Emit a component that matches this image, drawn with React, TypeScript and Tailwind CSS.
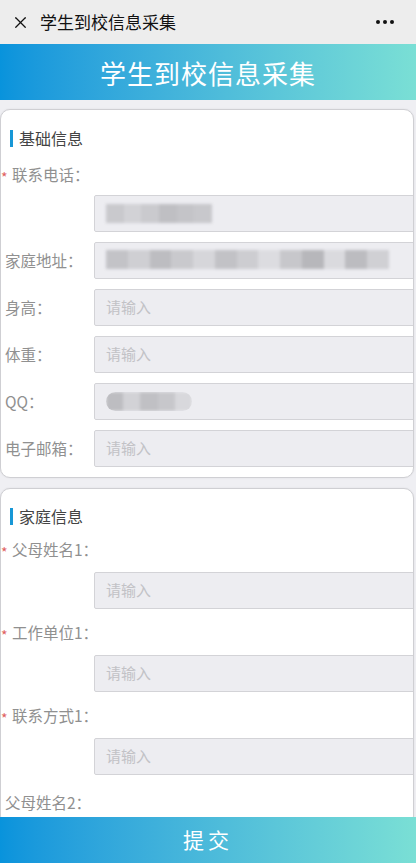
import { X } from "lucide-react";

const font = { fontFamily: '"Noto Sans CJK SC", "Noto Sans", sans-serif' };

const Label = ({ text, required }: { text: string; required?: boolean }) => (
  <div className="flex items-center h-6 text-[15.5px] text-[#909090] whitespace-nowrap">
    {required ? (
      <span className="w-[11px] text-[#e06060] text-[14px] leading-none pt-[3px]">*</span>
    ) : (
      <span className="w-[4px]" />
    )}
    <span>{text}：</span>
  </div>
);

const Input = ({ children }: { children?: React.ReactNode }) => (
  <div className="flex-1 h-[37px] bg-[#ededf1] border border-[#d3d3d7] rounded-[2px] flex items-center pl-[11px] text-[15px] text-[#c2c2c6] -mr-[2px]">
    {children ?? "请输入"}
  </div>
);

const Blur = ({ w, parts }: { w: number; parts: string[] }) => (
  <div className="flex h-[19px] blur-[1.5px]" style={{ width: w }}>
    {parts.map((c, i) => (
      <div key={i} className="flex-1 h-full" style={{ backgroundColor: c }} />
    ))}
  </div>
);

const Row = ({ text, children }: { text: string; children?: React.ReactNode }) => (
  <div className="flex items-center mt-[10px]">
    <div className="w-[93px] shrink-0">
      <Label text={text} />
    </div>
    <Input>{children}</Input>
  </div>
);

const Stacked = ({ text, required, top, gap }: { text: string; required?: boolean; top: number; gap: number }) => (
  <div style={{ marginTop: top }}>
    <Label text={text} required={required} />
    <div className="flex pl-[93px]" style={{ marginTop: gap }}>
      <Input />
    </div>
  </div>
);

const SectionTitle = ({ text }: { text: string }) => (
  <div className="flex items-center h-6 pl-[9px]">
    <span className="w-[3px] h-[17px] bg-[#1797d6] mr-[6px]" />
    <span className="text-[16px] text-[#444]">{text}</span>
  </div>
);

export default function App() {
  return (
    <div className="w-[416px] h-[863px] flex flex-col bg-[#efeff3] overflow-hidden" style={font}>
      <div className="h-[44px] shrink-0 bg-[#ededed] flex items-center pl-[11px] pr-[22px]">
        <X className="w-[19px] h-[19px] text-[#111]" strokeWidth={1.6} />
        <span className="ml-[10px] text-[17px] text-[#111] flex-1">学生到校信息采集</span>
        <div className="flex gap-[3px]">
          <span className="w-[4px] h-[4px] rounded-full bg-[#111]" />
          <span className="w-[4px] h-[4px] rounded-full bg-[#111]" />
          <span className="w-[4px] h-[4px] rounded-full bg-[#111]" />
        </div>
      </div>
      <div className="h-[56px] shrink-0 bg-gradient-to-r from-[#0893dc] to-[#7adfd5] flex items-center justify-center text-white text-[26px] tracking-[1px]">
        学生到校信息采集
      </div>

      <div className="flex-1 overflow-hidden pt-[9px]">
        <div className="w-[414px] bg-white border border-[#cfcfd3] rounded-[10px] overflow-hidden pt-[16px] pb-[10px] shadow-[0_0_2px_rgba(0,0,0,0.08)]">
          <SectionTitle text="基础信息" />
          <div className="mt-[13px]">
            <Label text="联系电话" required />
            <div className="flex pl-[93px] mt-[8px]">
              <Input>
                <Blur w={106} parts={["#c9c9cd", "#d2d2d6", "#cacace", "#bfbfc3", "#c4c4c8", "#c8c8cc"]} />
              </Input>
            </div>
          </div>
          <Row text="家庭地址">
            <div className="-mt-[2px]">
              <Blur w={283} parts={["#c3c3c7", "#cfcfd3", "#bdbdc1", "#c9c9cd", "#d6d6da", "#c2c2c6", "#cdcdd1", "#dcdce0", "#c7c7cb", "#b7b7bb", "#dadade", "#bcbcc0", "#d0d0d4"]} />
            </div>
          </Row>
          <Row text="身高" />
          <Row text="体重" />
          <Row text="QQ">
            <div className="rounded-full overflow-hidden">
              <Blur w={86} parts={["#bdbdc1", "#d2d2d6", "#c0c0c4", "#c7c7cb", "#d8d8dc"]} />
            </div>
          </Row>
          <Row text="电子邮箱" />
        </div>

        <div className="w-[414px] mt-[10px] bg-white border border-[#cfcfd3] rounded-[10px] overflow-hidden pt-[15px] pb-[10px] shadow-[0_0_2px_rgba(0,0,0,0.08)]">
          <SectionTitle text="家庭信息" />
          <Stacked text="父母姓名1" required top={10} gap={10} />
          <Stacked text="工作单位1" required top={12} gap={10} />
          <Stacked text="联系方式1" required top={12} gap={10} />
          <div className="mt-[16px]">
            <Label text="父母姓名2" />
          </div>
        </div>
      </div>

      <div className="h-[46px] shrink-0 bg-gradient-to-r from-[#0893dc] to-[#7adfd5] flex items-center justify-center text-white text-[21px] tracking-[4px]">
        提交
      </div>
    </div>
  );
}
